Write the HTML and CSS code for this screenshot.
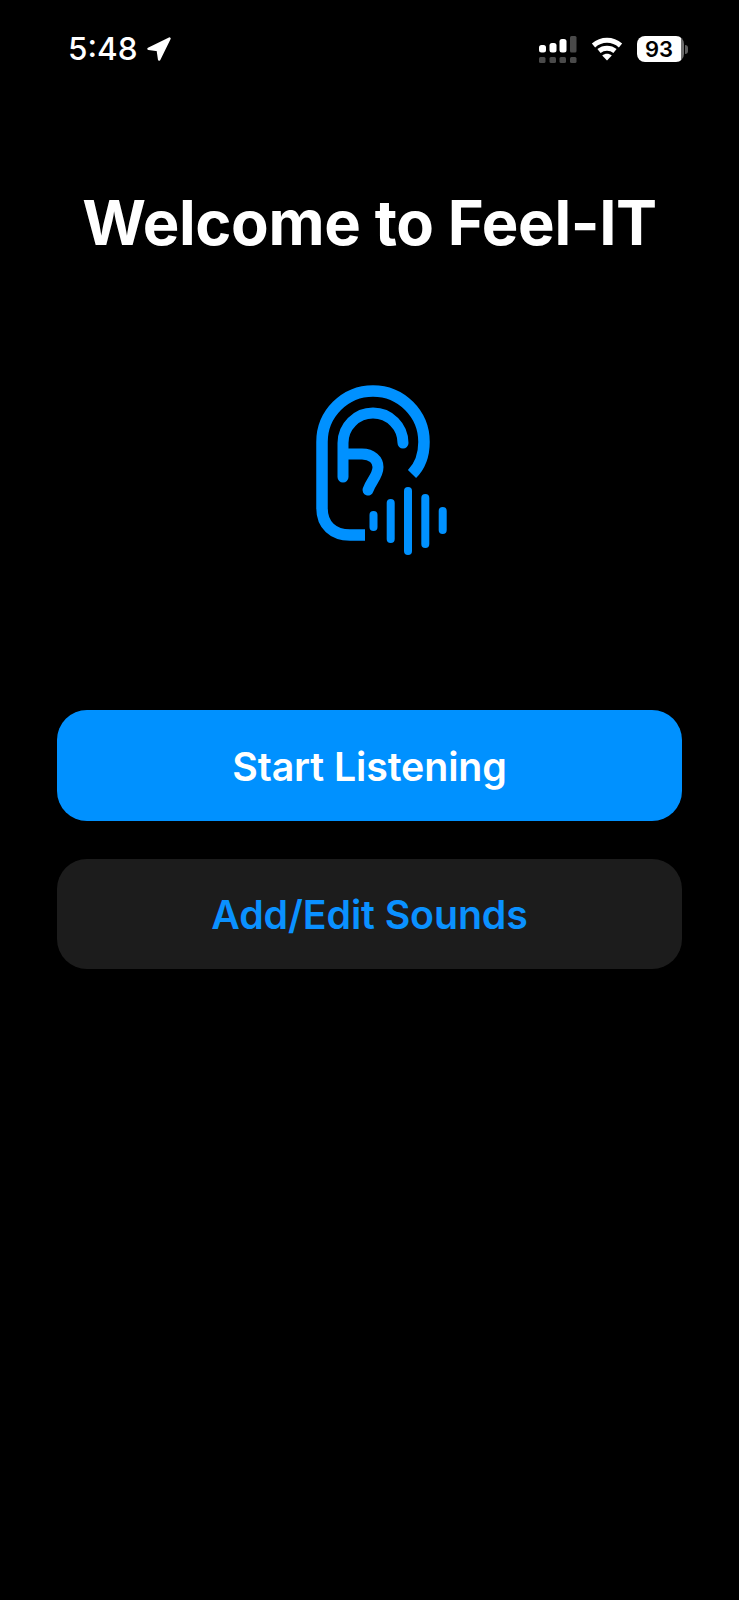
FILE: index.html
```html
<!DOCTYPE html>
<html lang="en">
<head>
<meta charset="utf-8">
<title>Feel-IT</title>
<link rel="stylesheet" href="styles.css">
</head>
<body>
<main class="screen">
  <header class="status">
    <div class="status-left">
      <span class="time">5:48</span>
      <svg class="arrow" viewBox="0 0 26 26"><path d="M23.5 2.5 2.500 12.800 11.800 14 13.200 23.500Z"/></svg>
    </div>
    <div class="status-right">
      <svg class="signal" viewBox="0 0 38 28">
        <rect class="on" x="0" y="9" width="7" height="7.500" rx="2.500"/>
        <rect class="on" x="10.500" y="7" width="7" height="9.500" rx="2.500"/>
        <rect class="on" x="20.500" y="3" width="7" height="13.500" rx="2.500"/>
        <rect class="off" x="31" y="0" width="6.500" height="16.500" rx="1.500"/>
        <rect class="off" x="0" y="21" width="6.500" height="6" rx="1.500"/>
        <rect class="off" x="10.500" y="21" width="6.500" height="6" rx="1.500"/>
        <rect class="off" x="20.500" y="21" width="6.500" height="6" rx="1.500"/>
        <rect class="off" x="31" y="21" width="6.500" height="6" rx="1.500"/>
      </svg>
      <svg class="wifi" viewBox="0 0 32 24">
        <path d="M2.500 8.500C10.500 1.500 21.500 1.500 29.500 8.500"/>
        <path d="M8 14C12.500 10.200 19.500 10.200 24 14"/>
        <path class="wifi-dot" d="M16 23.500 11.200 18.500C14 16.300 18 16.300 20.800 18.500Z"/>
      </svg>
      <div class="battery">
        <div class="battery-body"><span class="battery-level">93</span></div>
        <span class="battery-nub"></span>
      </div>
    </div>
  </header>

  <h1 class="title">Welcome to Feel-IT</h1>

  <div class="logo-wrap">
    <svg class="logo" viewBox="0 0 160 190">
      <g class="logo-line">
        <path class="butt" d="M112 104C120 96 124 85 124 72A51 51 0 0 0 22 72V138C22 155 33 165 50 165H65"/>
        <path d="M43 107V73A30 30 0 0 1 103 73"/>
        <path d="M46 84H62C72 84 78 90 78 97C78 106 71 111 68 120"/>
      </g>
      <g class="logo-bars">
        <path d="M73.500 145V157"/>
        <path d="M90.700 133V169"/>
        <path d="M108 121V181"/>
        <path d="M125.300 128V174"/>
        <path d="M142.700 141V160"/>
      </g>
    </svg>
  </div>

  <nav class="actions">
    <button class="btn btn-primary">Start Listening</button>
    <button class="btn btn-secondary">Add/Edit Sounds</button>
  </nav>
</main>
</body>
</html>
```
FILE: styles.css
```css
* { box-sizing: border-box; }
html, body { margin: 0; padding: 0; background: #000; }
body { font-family: Inter, "Liberation Sans", sans-serif; }
.screen { width: 739px; height: 1600px; background: #000; color: #fff; display: flex; flex-direction: column; overflow: hidden; }

.status { height: 62px; padding: 36px 51px 0 68px; display: flex; justify-content: space-between; align-items: flex-start; }
.status-left { display: flex; align-items: center; gap: 8px; height: 26px; }
.time { font-size: 31.500px; font-weight: 500; line-height: 26px; letter-spacing: 0; }
.arrow { width: 26px; height: 26px; }
.arrow path { fill: #fff; stroke: #fff; stroke-width: 2.500; stroke-linejoin: round; }
.status-right { display: flex; align-items: flex-start; }
.signal { width: 38px; height: 28px; margin-right: 14px; }
.on { fill: #fff; }
.off { fill: #4a4a4a; }
.wifi { width: 32px; height: 24px; margin-top: 1px; margin-right: 14px; }
.wifi path { fill: none; stroke: #fff; stroke-width: 5; }
.wifi .wifi-dot { fill: #fff; stroke: none; }
.battery { display: flex; align-items: center; height: 26px; }
.battery-body { width: 47px; height: 26px; border-radius: 8px; background: linear-gradient(90deg, #fff 0 93%, #6e6e6e 93% 100%); display: flex; align-items: center; justify-content: center; padding-right: 3px; }
.battery-level { color: #000; font-size: 22px; font-weight: 600; line-height: 26px; }
.battery-nub { width: 3px; height: 9px; background: #5e5e5e; border-radius: 0 3px 3px 0; margin-left: 1px; }

.title { margin: 123px 0 0; height: 76px; font-size: 61.500px; line-height: 76px; font-weight: 700; text-align: center; letter-spacing: -0.35px; }

.logo-wrap { height: 190px; margin-top: 109px; padding-left: 300px; }
.logo { display: block; width: 160px; height: 190px; }
.logo path { fill: none; stroke: #0091ff; stroke-linecap: round; stroke-linejoin: round; }
.logo-line path { stroke-width: 11; }
.logo-line .butt { stroke-linecap: butt; stroke-width: 11.500; }
.logo-bars path { stroke-width: 8; }

.actions { margin-top: 150px; padding: 0 57px; display: flex; flex-direction: column; gap: 38px; }
.btn { height: 110.500px; border: 0; border-radius: 30px; font-family: inherit; font-size: 39.300px; font-weight: 600; letter-spacing: -0.1px; display: block; width: 100%; padding: 2px 0 0; }
.btn-primary { background: #0091ff; color: #fff; }
.btn-secondary { background: #1c1c1c; color: #0a91ff; }
```
